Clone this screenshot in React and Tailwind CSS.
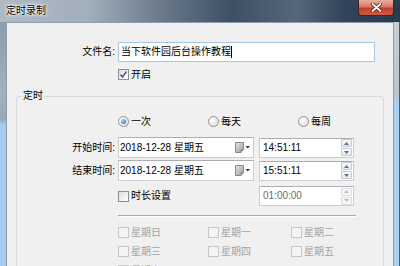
import React from "react"

const CheckBox = ({ checked, disabled }) => (
  <span
    className={`w-[11px] h-[11px] shrink-0 border flex items-center justify-center ${
      disabled
        ? "border-[#c6c6c6] bg-[#f4f4f4]"
        : "border-[#8f8f8f] bg-[linear-gradient(135deg,#dcdcdc,#ffffff)]"
    }`}
  >
    {checked && (
      <svg width="9" height="9" viewBox="0 0 9 9">
        <path d="M1.5 4.5 L3.5 7 L7.5 1.5" fill="none" stroke="#3d5a96" strokeWidth="1.4" />
      </svg>
    )}
  </span>
)

const Radio = ({ checked }) => (
  <span className="w-[11px] h-[11px] shrink-0 rounded-full border border-[#939393] bg-[radial-gradient(circle_at_35%_35%,#ffffff,#d8d8d8)] flex items-center justify-center">
    {checked && (
      <span className="w-[5px] h-[5px] rounded-full bg-[radial-gradient(circle_at_35%_35%,#9fd3ff,#1c67c8)]" />
    )}
  </span>
)

const Spin = ({ disabled }) => (
  <div className="flex flex-col gap-px mr-[1px]">
    {[0, 1].map((i) => (
      <span
        key={i}
        className={`w-[11px] h-[8px] border rounded-[1px] flex items-center justify-center ${
          disabled ? "border-[#dcdcdc] bg-[#f6f6f6]" : "border-[#c7cbd1] bg-[linear-gradient(180deg,#fafafa,#e6e8ec)]"
        }`}
      >
        <svg width="5" height="3" viewBox="0 0 5 3">
          <path d={i === 0 ? "M0 3 L2.5 0 L5 3Z" : "M0 0 L2.5 3 L5 0Z"} fill={disabled ? "#b8c0cc" : "#5b7397"} />
        </svg>
      </span>
    ))}
  </div>
)

const TimeBox = ({ value, disabled }) => (
  <div className="w-[95px] h-[20px] bg-white border border-[#c9ccd2] border-t-[#abadb3] flex items-center justify-between">
    <span className={`pl-[3px] ${disabled ? "text-[#6d6d6d]" : "text-black"}`}>{value}</span>
    <Spin disabled={disabled} />
  </div>
)

const DateBox = ({ value }) => (
  <div className="w-[136px] h-[21px] bg-white border border-[#c9ccd2] border-t-[#abadb3] flex items-center justify-between">
    <span className="pl-[1px]">{value}</span>
    <svg width="16" height="11" viewBox="0 0 16 11" className="mr-[2px]">
      <defs>
        <linearGradient id="cal" x1="0" y1="0" x2="1" y2="1">
          <stop offset="0" stopColor="#e8e8e8" />
          <stop offset="1" stopColor="#9a9a9a" />
        </linearGradient>
      </defs>
      <path d="M0.5 0.5 H8.5 V7.5 L6 10.5 H0.5Z" fill="url(#cal)" stroke="#8a8a8a" />
      <path d="M6 10.5 V7.5 H8.5" fill="none" stroke="#8a8a8a" />
      <path d="M10.5 4 L15 4 L12.75 6.5Z" fill="#1f3a6e" />
    </svg>
  </div>
)

const days = ["星期日", "星期一", "星期二", "星期三", "星期四", "星期五", "星期六"]

export default function App() {
  return (
    <div className="w-[400px] h-[266px] overflow-hidden flex flex-col text-[10px] leading-none text-black font-['Liberation_Sans','Noto_Sans_CJK_SC',sans-serif] bg-[linear-gradient(90deg,#aeb9c4_0%,#a2afbc_22%,#6b7b8c_40%,#3e5064_58%,#56677a_74%,#33445a_86%,#2a3a4e_100%)]">
      {/* title bar */}
      <div className="h-[22px] shrink-0 flex items-start justify-between">
        <span className="pl-[6px] pt-[6px] text-[10px] [text-shadow:0_0_5px_#fff,0_0_3px_#fff,0_0_2px_#fff]">定时录制</span>
        <div className="mr-[6px] w-[36px] h-[16px] rounded-b-[4px] border border-t-0 border-[#4a2020] bg-[linear-gradient(180deg,#e9b0a2_0%,#d77766_45%,#c23e2c_55%,#cf5a45_100%)] flex items-center justify-center">
          <svg width="11" height="9" viewBox="0 0 11 9">
            <path d="M1.5 1 L9.5 8 M9.5 1 L1.5 8" stroke="#5a1a10" strokeWidth="3.4" strokeLinecap="round" />
            <path d="M1.5 1 L9.5 8 M9.5 1 L1.5 8" stroke="#ffffff" strokeWidth="1.8" strokeLinecap="round" />
          </svg>
        </div>
      </div>

      <div className="flex flex-1 min-h-0">
        {/* left frame */}
        <div className="w-[6px] shrink-0 bg-[linear-gradient(180deg,#8d9cab_0%,#a4b1bd_30%,#9aa9b8_40%,#a6cbf0_42%,#a6cbf0_100%)]" />

        <div className="flex-1 bg-[#f0f0f0] border-t border-l border-r border-[#8d9db0] flex flex-col">
          {/* file name */}
          <div className="mt-[19px] flex items-center h-[20px]">
            <span className="w-[108px] text-right">文件名:</span>
            <div className="ml-[3px] w-[257px] h-[20px] bg-white border border-[#a7c6e6] flex items-center pl-[2px]">
              当下软件园后台操作教程<span className="w-px h-[12px] bg-black" />
            </div>
          </div>

          <div className="mt-[7px] ml-[111px] flex items-center gap-[2px] h-[12px]">
            <CheckBox checked />
            <span>开启</span>
          </div>

          {/* group box */}
          <div className="mt-[16px] ml-[9px] w-[368px] h-[200px] shrink-0 border border-[#d5dadf] rounded-[3px] relative flex flex-col">
            <span className="absolute -top-[6px] left-[5px] px-[1px] bg-[#f0f0f0]">定时</span>

            <div className="mt-[19px] ml-[101px] flex items-center h-[11px]">
              {["一次", "每天", "每周"].map((t, i) => (
                <div key={t} className={`flex items-center gap-[2px] ${i === 2 ? "w-[81px]" : "w-[90px]"}`}>
                  <Radio checked={i === 0} />
                  <span>{t}</span>
                </div>
              ))}
            </div>

            <div className="mt-[10px] flex items-center h-[21px]">
              <span className="w-[98px] text-right">开始时间:</span>
              <div className="ml-[3px]"><DateBox value="2018-12-28 星期五" /></div>
              <div className="ml-[5px]"><TimeBox value="14:51:11" /></div>
            </div>

            <div className="mt-[2px] flex items-center h-[21px]">
              <span className="w-[98px] text-right">结束时间:</span>
              <div className="ml-[3px]"><DateBox value="2018-12-28 星期五" /></div>
              <div className="ml-[5px]"><TimeBox value="15:51:11" /></div>
            </div>

            <div className="mt-[5px] ml-[101px] flex items-center h-[20px]">
              <div className="w-[141px] flex items-center gap-[2px]">
                <CheckBox />
                <span>时长设置</span>
              </div>
              <TimeBox value="01:00:00" disabled />
            </div>

            <div className="mt-[9px] ml-[101px] w-[238px] h-px bg-[#a9a9a9] shadow-[0_1px_0_#ffffff]" />

            <div className="mt-[11px] ml-[101px] grid grid-cols-[90px_83px_60px] gap-y-[8px] text-[#a3a3a3]">
              {days.map((d) => (
                <div key={d} className="flex items-center gap-[2px] h-[11px]">
                  <CheckBox disabled />
                  <span>{d}</span>
                </div>
              ))}
            </div>
          </div>
        </div>

        {/* right frame */}
        <div className="w-[6px] shrink-0 border-r border-[#4a5a6a] bg-[linear-gradient(180deg,#c6ced6_0%,#b8c4cf_30%,#a9cff3_33%,#a9cff3_100%)]" />
      </div>
    </div>
  )
}
